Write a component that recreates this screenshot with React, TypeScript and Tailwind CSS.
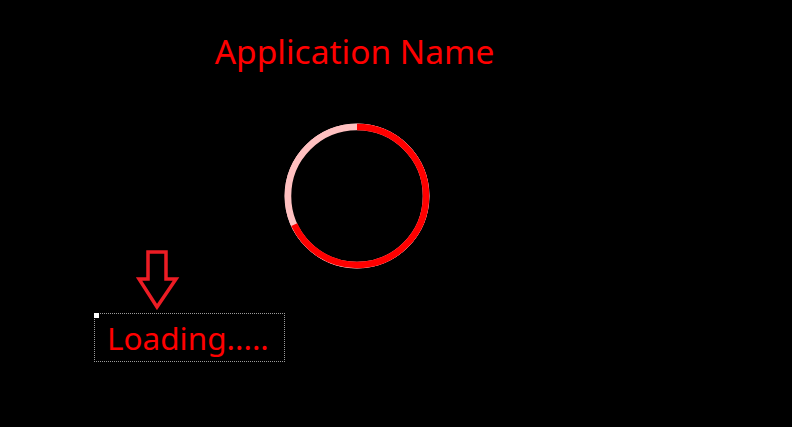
export default function App() {
  const r = 69;
  const c = 2 * Math.PI * r;
  const red = c * (245 / 360);

  return (
    <div className="w-full h-[427px] bg-black overflow-hidden font-['Noto_Sans',sans-serif]">
      <div className="w-[714px] flex flex-col items-center pt-[31px]">
        <h1 className="mr-[5px] text-[33.5px] leading-[40px] text-[#ff0000]">Application Name</h1>
        <div className="mt-[52px]">
          <svg width="146" height="146" viewBox="0 0 146 146">
            <circle cx="73" cy="73" r="72" fill="none" stroke="#ffc8c8" strokeWidth="1" />
            <circle cx="73" cy="73" r={r} fill="none" stroke="#ffc0c0" strokeWidth="6.5" />
            <circle
              cx="73"
              cy="73"
              r={r}
              fill="none"
              stroke="#ff0000"
              strokeWidth="6.5"
              strokeDasharray={`${red} ${c}`}
              transform="rotate(-90 73 73)"
            />
          </svg>
        </div>
      </div>
      <div className="ml-[94px] mt-[-19px] w-[191px]">
        <div className="ml-[42px]">
          <svg width="44" height="60" viewBox="0 0 44 60">
            <path
              d="M12 2 H30 V29 H40 L21 57 L3 29 H12 Z"
              fill="none"
              stroke="#ed1c24"
              strokeWidth="3.5"
              strokeLinejoin="miter"
            />
          </svg>
        </div>
        <div className="relative mt-[3px] h-[49px] border border-dotted border-[#9a9a9a] flex items-center pl-[12px]">
          <span className="absolute left-[-1px] top-[-1px] w-[5px] h-[5px] bg-white" />
          <span className="text-[31.5px] leading-none text-[#ff0000]">Loading.....</span>
        </div>
      </div>
    </div>
  );
}
